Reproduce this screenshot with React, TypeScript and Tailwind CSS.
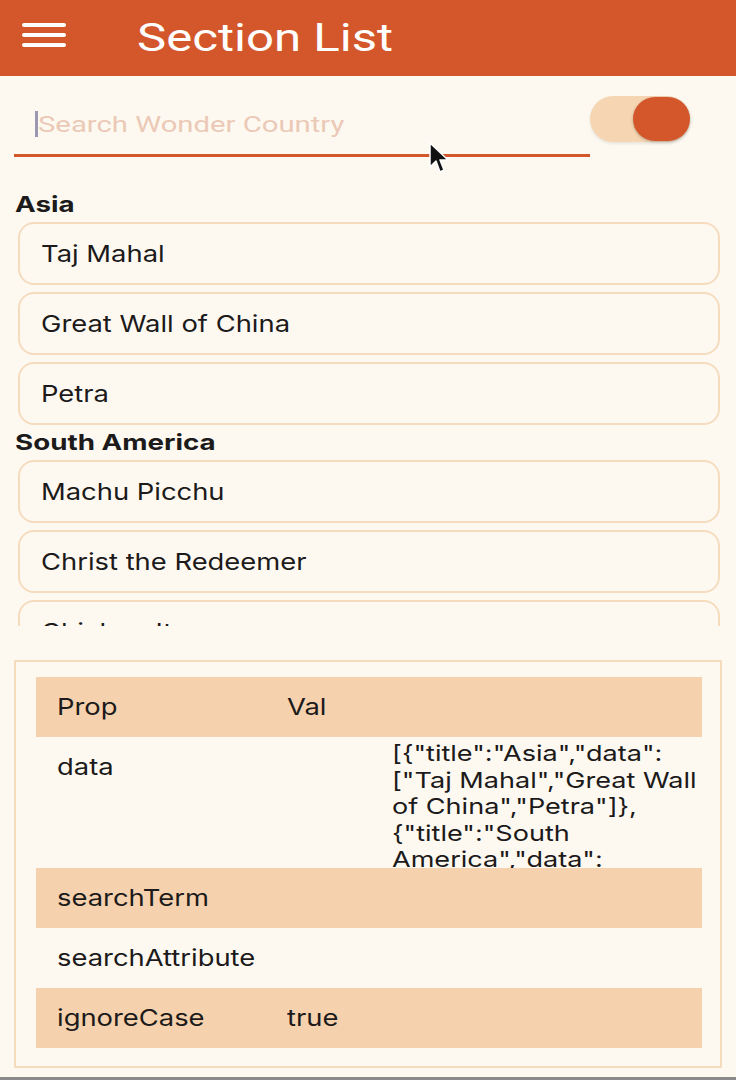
import React from "react";

const asia = ["Taj Mahal", "Great Wall of China", "Petra"];
const southAmerica = ["Machu Picchu", "Christ the Redeemer", "Chichen Itza"];

function S({ children }: { children: React.ReactNode }) {
  return <span className="inline-block origin-left scale-x-[1.19] whitespace-nowrap">{children}</span>;
}

function Card({ label }: { label: string }) {
  return (
    <div className="ml-[18px] mr-[16px] h-[63px] shrink-0 rounded-[16px] border-2 border-[#f6dcbf] flex items-center pl-[21px] pt-[2px] text-[23px] text-[#1c1a1a]">
      <S>{label}</S>
    </div>
  );
}

function Section({ title, items }: { title: string; items: string[] }) {
  return (
    <div className="flex flex-col">
      <div className="h-[35px] flex items-center pl-[15px] text-[22px] font-bold text-[#1c1a1a]">
        <span className="inline-block origin-left scale-x-[1.26] whitespace-nowrap">{title}</span>
      </div>
      <div className="flex flex-col gap-[7px]">
        {items.map((i) => (
          <Card key={i} label={i} />
        ))}
      </div>
    </div>
  );
}

function J({ children }: { children: React.ReactNode }) {
  return <div className="origin-left scale-x-[1.23] whitespace-nowrap">{children}</div>;
}

export default function App() {
  const rowText = "text-[23px] text-[#1c1a1a]";
  return (
    <div
      className="relative w-[736px] h-[1080px] bg-[#fdf9f1] overflow-hidden flex flex-col"
      style={{ fontFamily: "Inter, 'Noto Sans', sans-serif" }}
    >
      {/* Header */}
      <div className="h-[76px] shrink-0 bg-[#d4572b] flex items-center">
        <div className="ml-[22px] w-[44px] flex flex-col gap-[6px] -mt-[6px]">
          <div className="h-[4px] rounded-full bg-white" />
          <div className="h-[4px] rounded-full bg-white" />
          <div className="h-[4px] rounded-full bg-white" />
        </div>
        <div
          className="ml-[71px] text-white text-[39px] leading-none"
          style={{ fontFamily: "Roboto, sans-serif" }}
        >
          <span className="inline-block origin-left scale-x-[1.26] whitespace-nowrap">Section List</span>
        </div>
      </div>

      {/* Search row */}
      <div className="mt-[18px] flex items-start pl-[14px] shrink-0">
        <div className="w-[576px] h-[63px] border-b-[3px] border-[#d4572b] flex items-center pl-[21px] relative">
          <div className="w-[3px] h-[26px] bg-[#9d98b2]" />
          <span
            className="text-[22px] text-[#ebc9b6] inline-block origin-left scale-x-[1.33] whitespace-nowrap"
            style={{ fontFamily: "Roboto, sans-serif" }}
          >
            Search Wonder Country
          </span>
        </div>
        <div className="mt-[2px] w-[100px] h-[46px] rounded-full bg-[#f5d5b2] flex items-center justify-end shadow-[0_2px_3px_rgba(0,0,0,0.08)]">
          <div className="w-[57px] h-[44px] rounded-full bg-[#d4572b] shadow-[0_1px_3px_rgba(0,0,0,0.25)]" />
        </div>
      </div>

      {/* List */}
      <div className="mt-[30px] h-[439px] shrink-0 overflow-hidden flex flex-col">
        <Section title="Asia" items={asia} />
        <Section title="South America" items={southAmerica} />
      </div>

      {/* Props table */}
      <div className="mt-[34px] mx-[14px] h-[408px] border-2 border-[#f6dcbf] pl-[20px] pr-[18px] pt-[15px]">
        <div className="flex flex-col">
          <div className={`h-[60px] bg-[#f5d2ad] flex items-center ${rowText}`}>
            <div className="w-[251px] pl-[21px]"><S>Prop</S></div>
            <div><S>Val</S></div>
          </div>
          <div className={`h-[131px] overflow-x-visible overflow-y-clip flex ${rowText}`}>
            <div className="w-[356px] pl-[21px] h-[60px] flex items-center shrink-0"><S>data</S></div>
            <div className="pt-[3px] leading-[26.5px] text-[22px]">
              <J>[{"{"}"title":"Asia","data":</J>
              <J>["Taj Mahal","Great Wall</J>
              <J>of China","Petra"]{"}"},</J>
              <J>{"{"}"title":"South</J>
              <J>America","data":</J>
            </div>
          </div>
          <div className={`h-[60px] bg-[#f5d2ad] flex items-center ${rowText}`}>
            <div className="w-[251px] pl-[21px]"><S>searchTerm</S></div>
            <div></div>
          </div>
          <div className={`h-[60px] flex items-center ${rowText}`}>
            <div className="w-[251px] pl-[21px]"><S>searchAttribute</S></div>
            <div></div>
          </div>
          <div className={`h-[60px] bg-[#f5d2ad] flex items-center ${rowText}`}>
            <div className="w-[251px] pl-[21px]"><S>ignoreCase</S></div>
            <div><S>true</S></div>
          </div>
        </div>
      </div>

      <div className="absolute left-0 right-0 bottom-0 h-[3px] bg-[#8a8a8a]" />

      {/* Mouse pointer */}
      <svg
        className="absolute left-[429px] top-[142px]"
        width="22"
        height="34"
        viewBox="0 0 22 34"
      >
        <path
          d="M1 1 L1 25 L7 19 L11 30 L15 28 L11 18 L19 18 Z"
          fill="#111"
          stroke="#fff"
          strokeWidth="1.5"
          strokeLinejoin="round"
        />
      </svg>
    </div>
  );
}
